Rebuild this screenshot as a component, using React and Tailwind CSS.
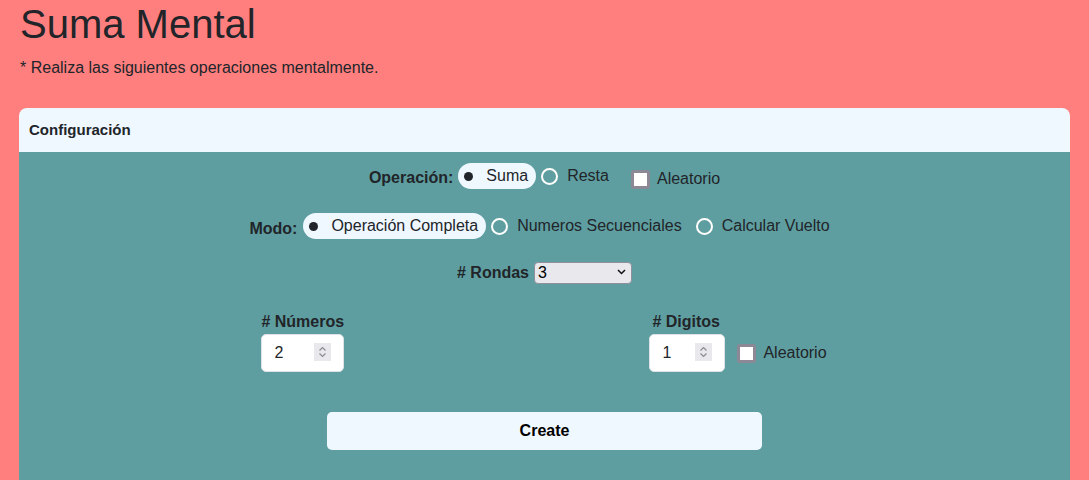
import React, { useState } from 'react'

function Radio({ checked, label, onClick })
{
    if (checked) {
        return (
            <button onClick={onClick} className="flex items-center h-[26px] pl-[6px] pr-[8px] rounded-full bg-[#f0f8ff] text-[#212529]">
                <span className="w-[9px] h-[9px] rounded-full bg-[#212529]"></span>
                <span className="ml-[13px]">{label}</span>
            </button>
        );
    }
    return (
        <button onClick={onClick} className="flex items-center h-[26px] text-[#212529]">
            <span className="w-[17px] h-[17px] rounded-full border-2 border-white"></span>
            <span className="ml-[9px]">{label}</span>
        </button>
    );
}

function Check({ checked, onClick })
{
    return (
        <span
            onClick={onClick}
            className="w-[19px] h-[19px] rounded-[3px] border-[3px] border-[#8d8895] bg-white flex items-center justify-center"
        >
            {checked && <span className="w-[9px] h-[9px] bg-[#212529]"></span>}
        </span>
    );
}

function NumberBox({ value, width, setValue })
{
    return (
        <div className={`relative h-[38px] ${width}`}>
            <input
                type="number"
                value={value}
                onChange={(e) => setValue(e.target.value)}
                className="w-full h-full bg-white border border-[#dee2e6] rounded-[5px] pl-[12px] text-[#212529] [appearance:textfield] [&::-webkit-inner-spin-button]:appearance-none [&::-webkit-outer-spin-button]:appearance-none outline-none"
            />
            <span className="absolute right-[13px] top-[9px] w-[17px] h-[18px] bg-[#e9e9ed] flex items-center justify-center pointer-events-none">
                <svg width="9" height="12" viewBox="0 0 9 12" fill="none" stroke="#8a8a94" strokeWidth="1.2">
                    <path d="M1.5 4.5 L4.5 1.5 L7.5 4.5" />
                    <path d="M1.5 7.5 L4.5 10.5 L7.5 7.5" />
                </svg>
            </span>
        </div>
    );
}

export default function App()
{
    const [op, setOp] = useState('suma');
    const [modo, setModo] = useState('completa');
    const [opRandom, setOpRandom] = useState(false);
    const [digRandom, setDigRandom] = useState(false);
    const [rondas, setRondas] = useState('3');
    const [numeros, setNumeros] = useState('2');
    const [digitos, setDigitos] = useState('1');

    return (
        <div className="min-h-screen bg-[#ff7f7f] px-[19px] text-[#212529] font-['Liberation_Sans',Arial,sans-serif] text-[16px]">
            <h1 className="text-[40px] leading-[48px] pl-px mb-[8px]">Suma Mental</h1>
            <p className="leading-[24px] pl-px">* Realiza las siguientes operaciones mentalmente.</p>

            <div className="mt-[28px] rounded-t-[8px] overflow-hidden">
                <div className="h-[44px] bg-[#f0f8ff] flex items-center px-[10px]">
                    <h2 className="text-[15px] font-bold">Configuración</h2>
                </div>
                <div className="bg-[#5f9ea0] pt-[11px] pb-[40px]">
                    <div className="flex justify-center items-center h-[26px]">
                        <span className="font-bold mt-[4px] mr-[5px]">Operación:</span>
                        <Radio checked={op === 'suma'} label="Suma" onClick={() => setOp('suma')} />
                        <span className="w-[5px]"></span>
                        <Radio checked={op === 'resta'} label="Resta" onClick={() => setOp('resta')} />
                        <span className="flex items-center ml-[22px] mt-[6px]">
                            <Check checked={opRandom} onClick={() => setOpRandom(!opRandom)} />
                            <span className="ml-[7px]">Aleatorio</span>
                        </span>
                    </div>

                    <div className="flex justify-center items-center h-[26px] mt-[24px] pr-[10px]">
                        <span className="font-bold mt-[5px] mr-[6px]">Modo:</span>
                        <Radio checked={modo === 'completa'} label="Operación Completa" onClick={() => setModo('completa')} />
                        <span className="w-[5px]"></span>
                        <Radio checked={modo === 'secuencial'} label="Numeros Secuenciales" onClick={() => setModo('secuencial')} />
                        <span className="w-[14px]"></span>
                        <Radio checked={modo === 'vuelto'} label="Calcular Vuelto" onClick={() => setModo('vuelto')} />
                    </div>

                    <div className="flex justify-center items-center h-[24px] mt-[22px]">
                        <span className="font-bold mr-[5px]"># Rondas</span>
                        <div className="relative">
                            <select
                                value={rondas}
                                onChange={(e) => setRondas(e.target.value)}
                                className="appearance-none w-[98px] h-[22px] bg-[#e9e9ed] border border-[#8f8f9d] rounded-[4px] pl-[3px] text-[16px] leading-[20px] text-black outline-none"
                            >
                                <option value="3">3</option>
                                <option value="5">5</option>
                                <option value="10">10</option>
                            </select>
                            <svg className="absolute right-[6px] top-[8px] pointer-events-none" width="9" height="6" viewBox="0 0 9 6" fill="none" stroke="#111" strokeWidth="1.5">
                                <path d="M1 1 L4.5 4.5 L8 1" />
                            </svg>
                        </div>
                    </div>

                    <div className="flex justify-center gap-[305px] mt-[25px] pr-px">
                        <div className="flex flex-col">
                            <span className="font-bold leading-[24px]"># Números</span>
                            <NumberBox value={numeros} setValue={setNumeros} width="w-[83px]" />
                        </div>
                        <div className="flex flex-col">
                            <span className="font-bold leading-[24px] pl-[3px]"># Digitos</span>
                            <div className="flex items-center">
                                <NumberBox value={digitos} setValue={setDigitos} width="w-[76px]" />
                                <span className="ml-[12px] mt-[1px]">
                                    <Check checked={digRandom} onClick={() => setDigRandom(!digRandom)} />
                                </span>
                                <span className="ml-[7px]">Aleatorio</span>
                            </div>
                        </div>
                    </div>

                    <div className="flex justify-center mt-[40px]">
                        <button className="w-[435px] h-[38px] bg-[#f0f8ff] rounded-[5px] font-bold text-black">
                            Create
                        </button>
                    </div>
                </div>
            </div>
        </div>
    )
}
